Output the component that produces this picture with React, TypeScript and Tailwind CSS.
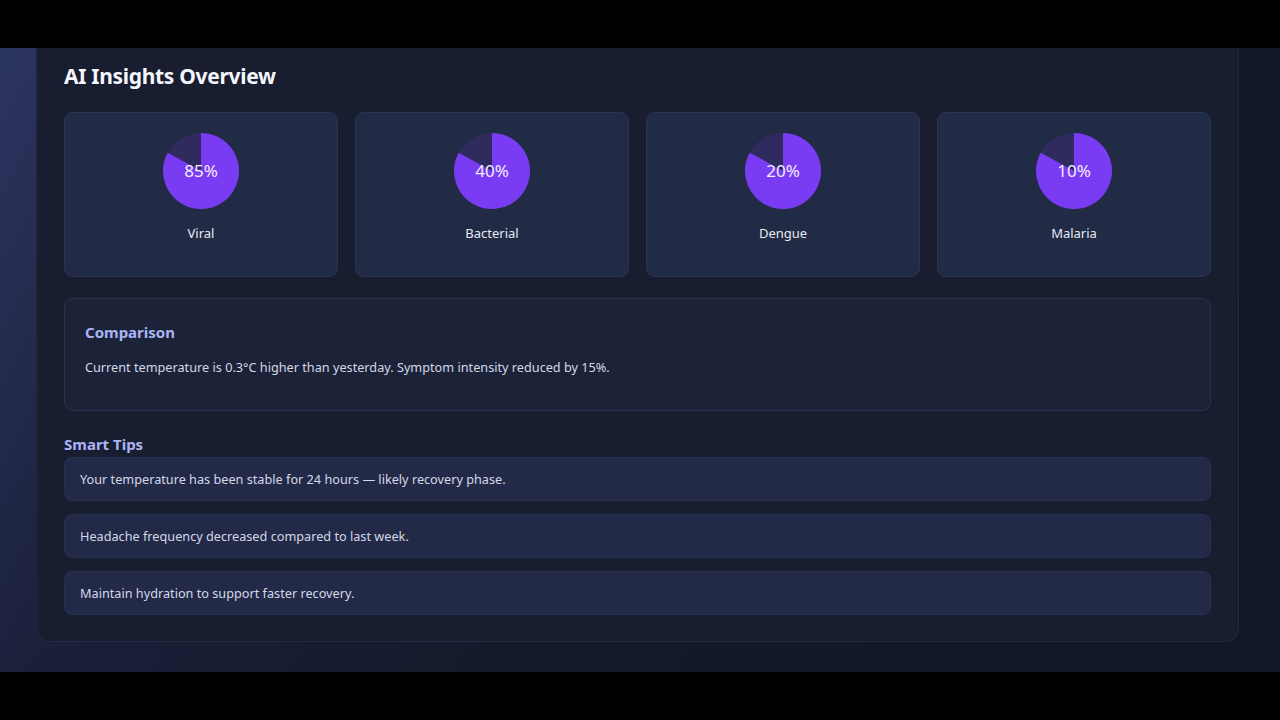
import React from "react";

type Insight = {
    label: string;
    value: number;
};

const insights: Insight[] = [
    { label: "Viral", value: 85 },
    { label: "Bacterial", value: 40 },
    { label: "Dengue", value: 20 },
    { label: "Malaria", value: 10 },
];

const tips = [
    "Your temperature has been stable for 24 hours — likely recovery phase.",
    "Headache frequency decreased compared to last week.",
    "Maintain hydration to support faster recovery.",
];

// Filled pie: purple share plus a muted remainder wedge starting at 12 o'clock
const Pie = ({ value }: { value: number }) => {
    const r = 38;
    const filled = 0.83;
    const angle = filled * Math.PI * 2;
    const x = 38 + r * Math.sin(angle);
    const y = 38 - r * Math.cos(angle);
    const large = filled > 0.5 ? 1 : 0;
    return (
        <div className="relative w-[76px] h-[76px]">
            <svg width="76" height="76" viewBox="0 0 76 76" className="absolute inset-0">
                <circle cx="38" cy="38" r={r} fill="#2f2b5e" />
                <path
                    d={`M38 38 L38 0 A${r} ${r} 0 ${large} 1 ${x.toFixed(2)} ${y.toFixed(2)} Z`}
                    fill="#7a3cf2"
                />
            </svg>
            <span className="absolute inset-0 flex items-center justify-center text-[17px] text-[#f3eefe]">
                {value}%
            </span>
        </div>
    );
};

export default function App() {
    return (
        <div
            className="h-[720px] w-[1280px] flex flex-col bg-black overflow-hidden"
            style={{ fontFamily: '"Noto Sans", "Open Sans", sans-serif' }}
        >
            <div className="h-12 bg-black" />

            <div className="h-[624px] flex bg-[linear-gradient(120deg,#2c3561_0%,#1a2039_24%,#151a2c_50%,#131826_75%,#121725_100%)]">
                <div className="w-9" />
                <div className="w-[1203px] h-[594px] bg-[#181d2f] border-x border-b border-[#232a3d] rounded-b-[14px] px-[27px] pt-[14px] flex flex-col">
                    <h2 className="text-[21px] leading-7 font-bold text-[#f4f6fb] tracking-[-0.3px]">
                        AI Insights Overview
                    </h2>

                    {/* Diagnosis probability cards */}
                    <div className="mt-[22px] grid grid-cols-4 gap-[17px]">
                        {insights.map((item) => (
                            <div
                                key={item.label}
                                className="h-[165px] bg-[#222b46] border border-[#2b3453] rounded-[9px] pt-[20px] flex flex-col items-center"
                            >
                                <Pie value={item.value} />
                                <span className="mt-[14px] text-[13px] leading-5 text-[#e6e9f2]">
                                    {item.label}
                                </span>
                            </div>
                        ))}
                    </div>

                    {/* Comparison */}
                    <div className="mt-[21px] h-[113px] bg-[#1c2339] border border-[#2a3250] rounded-[9px] px-5 pt-[22px]">
                        <h3 className="text-[15px] leading-[22px] font-bold text-[#aab4f5]">Comparison</h3>
                        <p className="mt-[14px] text-[12.7px] leading-5 text-[#d3d8e6]">
                            Current temperature is 0.3°C higher than yesterday. Symptom intensity reduced by 15%.
                        </p>
                    </div>

                    {/* Smart tips */}
                    <h3 className="mt-[22px] text-[15px] leading-[22px] font-bold text-[#aab4f5]">Smart Tips</h3>
                    <div className="mt-[2px] flex flex-col gap-[13px]">
                        {tips.map((tip) => (
                            <div
                                key={tip}
                                className="h-[44px] bg-[#232a48] border border-[#283052] rounded-[8px] px-[15px] pt-[1px] flex items-center text-[12.7px] text-[#d3d8e6]"
                            >
                                {tip}
                            </div>
                        ))}
                    </div>
                </div>
                <div className="flex-1" />
            </div>

            <div className="h-12 bg-black" />
        </div>
    );
}
